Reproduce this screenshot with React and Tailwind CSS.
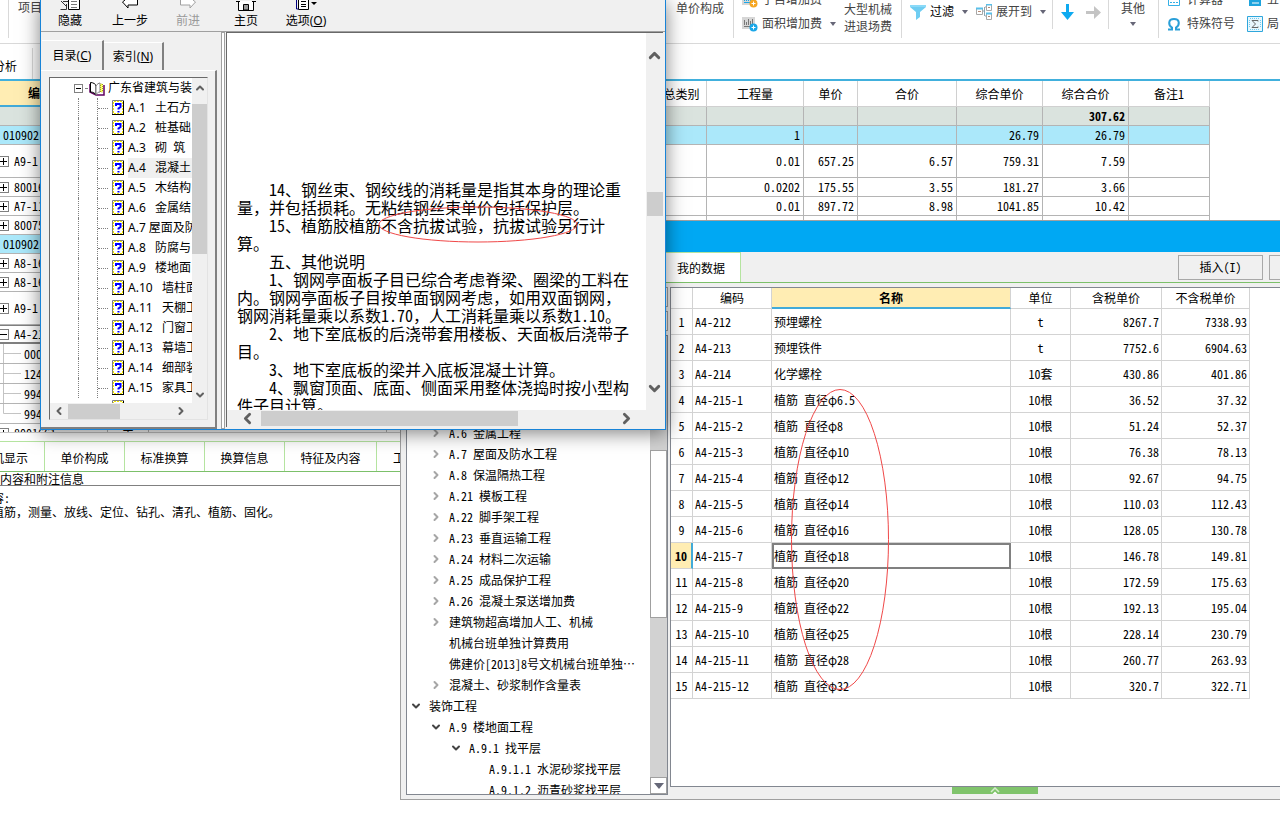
import { ChevronDown, ChevronLeft, ChevronRight, ChevronUp } from "lucide-react";

const SONG = "font-['Noto_Sans_Mono_CJK_SC','Noto_Sans_CJK_SC',monospace]";
const YAHEI = "font-['Noto_Sans','Noto_Sans_CJK_SC',sans-serif]";

const BUDGET_ROWS = [
  { code: "", kind: "total", total: "307.62" },
  { code: "010902", kind: "item", qty: "1", compPrice: "26.79", total: "26.79" },
  { code: "A9-1", mark: "+", tall: true, qty: "0.01", price: "657.25", sum: "6.57", compPrice: "759.31", total: "7.59" },
  { code: "80016", mark: "+", qty: "0.0202", price: "175.55", sum: "3.55", compPrice: "181.27", total: "3.66" },
  { code: "A7-11", mark: "+", qty: "0.01", price: "897.72", sum: "8.98", compPrice: "1041.85", total: "10.42" },
  { code: "80075", mark: "+" },
  { code: "010902", kind: "item" },
  { code: "A8-16", mark: "+" },
  { code: "A8-16", mark: "+" },
  { code: "A9-1", mark: "+", tall: true },
  { code: "A4-21", mark: "-", current: true },
  { code: "0001", child: true },
  { code: "1241", child: true },
  { code: "9946", child: true },
  { code: "9946", child: true, last: true },
  { code: "8001661", mark: "+", type: "主" },
];

const HELP_TOPICS = [
  "A.1   土石方",
  "A.2   桩基础",
  "A.3   砌  筑",
  "A.4   混凝土",
  "A.5   木结构",
  "A.6   金属结",
  "A.7 屋面及防",
  "A.8   防腐与",
  "A.9   楼地面",
  "A.10   墙柱面",
  "A.11   天棚工",
  "A.12   门窗工",
  "A.13   幕墙工",
  "A.14   细部装",
  "A.15   家具工",
];

const HELP_TEXT = [
  ["14、钢丝束、钢绞线的消耗量是指其本身的理论重", "量，并包括损耗。无粘结钢丝束单价包括保护层。"],
  ["15、植筋胶植筋不含抗拔试验，抗拔试验另行计", "算。"],
  ["五、其他说明"],
  [
    "1、钢网亭面板子目已综合考虑脊梁、圈梁的工料在",
    "内。钢网亭面板子目按单面钢网考虑，如用双面钢网，",
    "钢网消耗量乘以系数1.70，人工消耗量乘以系数1.10。",
  ],
  ["2、地下室底板的后浇带套用楼板、天面板后浇带子", "目。"],
  ["3、地下室底板的梁并入底板混凝土计算。"],
  ["4、飘窗顶面、底面、侧面采用整体浇捣时按小型构", "件子目计算。"],
];

const CHAPTERS = [
  { label: "A.6 金属工程", level: 1, state: "closed" },
  { label: "A.7 屋面及防水工程", level: 1, state: "closed" },
  { label: "A.8 保温隔热工程", level: 1, state: "closed" },
  { label: "A.21 模板工程", level: 1, state: "closed" },
  { label: "A.22 脚手架工程", level: 1, state: "closed" },
  { label: "A.23 垂直运输工程", level: 1, state: "closed" },
  { label: "A.24 材料二次运输", level: 1, state: "closed" },
  { label: "A.25 成品保护工程", level: 1, state: "closed" },
  { label: "A.26 混凝土泵送增加费", level: 1, state: "closed" },
  { label: "建筑物超高增加人工、机械", level: 1, state: "closed" },
  { label: "机械台班单独计算费用", level: 1 },
  { label: "佛建价[2013]8号文机械台班单独⋯", level: 1 },
  { label: "混凝土、砂浆制作含量表", level: 1, state: "closed" },
  { label: "装饰工程", level: 0, state: "open" },
  { label: "A.9 楼地面工程", level: 1, state: "open" },
  { label: "A.9.1 找平层", level: 2, state: "open" },
  { label: "A.9.1.1 水泥砂浆找平层", level: 3 },
  { label: "A.9.1.2 沥青砂浆找平层", level: 3 },
];

const LEVEL_PADDING = ["pl-[3px]", "pl-[23px]", "pl-[43px]", "pl-[63px]"];

const QUOTA_ROWS = [
  ["A4-212", "预埋螺栓", "t", "8267.7", "7338.93"],
  ["A4-213", "预埋铁件", "t", "7752.6", "6904.63"],
  ["A4-214", "化学螺栓", "10套", "430.86", "401.86"],
  ["A4-215-1", "植筋 直径φ6.5", "10根", "36.52", "37.32"],
  ["A4-215-2", "植筋 直径φ8", "10根", "51.24", "52.37"],
  ["A4-215-3", "植筋 直径φ10", "10根", "76.38", "78.13"],
  ["A4-215-4", "植筋 直径φ12", "10根", "92.67", "94.75"],
  ["A4-215-5", "植筋 直径φ14", "10根", "110.03", "112.43"],
  ["A4-215-6", "植筋 直径φ16", "10根", "128.05", "130.78"],
  ["A4-215-7", "植筋 直径φ18", "10根", "146.78", "149.81"],
  ["A4-215-8", "植筋 直径φ20", "10根", "172.59", "175.63"],
  ["A4-215-9", "植筋 直径φ22", "10根", "192.13", "195.04"],
  ["A4-215-10", "植筋 直径φ25", "10根", "228.14", "230.79"],
  ["A4-215-11", "植筋 直径φ28", "10根", "260.77", "263.93"],
  ["A4-215-12", "植筋 直径φ32", "10根", "320.7", "322.71"],
];

function Caret() {
  return (
    <svg width="6" height="4" viewBox="0 0 6 4" className="shrink-0">
      <path d="M0 0h6L3 4z" fill="#667" />
    </svg>
  );
}

function GridPlusIcon({ badge, ink }) {
  return (
    <svg width="16" height="16" viewBox="0 0 16 16" className="shrink-0">
      <path d="M0 1h13v12H0z" fill="#d6d6d6" />
      <path d="M2.500 4v5M4.500 6v3M6.500 3v6M8.500 5v4M10.500 3v5M2 10.500h6" stroke={ink} />
      <circle cx="11.500" cy="11.500" r="4" fill={badge} />
      <path d="M11.500 9.500v4M9.500 11.500h4" stroke="#fff" />
    </svg>
  );
}

function FilterIcon() {
  return (
    <svg width="16" height="15" viewBox="0 0 16 15">
      <path d="M0 0h16v2l-6 5v5l-4 3V7L0 2z" fill="#6fcdf2" />
      <path d="M0 0h16v2H0z" fill="#8bdaf8" />
    </svg>
  );
}

function ExpandIcon() {
  return (
    <svg width="16" height="16" viewBox="0 0 16 16" fill="none">
      <path d="M7 7h2M9 3h1M9 12h1M8.500 3v9" stroke="#8fa6b2" />
      <path d="M.5 4.500h6v6h-6zM10.500.5h5v6h-5zM10.500 9.500h5v6h-5z" stroke="#a8a8a8" fill="#fff" />
      <path d="M0 4.500h7M10 .5h6M10 9.500h6" stroke="#59c0ea" strokeWidth="2" />
      <path d="M2 7.500h3M12 3.500h2M12 12.500h2" stroke="#b98a74" />
    </svg>
  );
}

function SigmaIcon() {
  return (
    <svg width="16" height="16" viewBox="0 0 16 16" fill="none">
      <path d="M.5.5h15v15H.5z" stroke="#2fa7dc" fill="#e9f7fd" />
      <path d="M3 2.500h10M3 13.500h10M2.500 4v8M13.500 4v8" stroke="#73c9ec" strokeDasharray="1 1" />
      <path d="M11 5.500V4.500H5l3.500 3.500L5 11.500h6v-1" stroke="#666" />
    </svg>
  );
}

function Divider({ short }) {
  return <div className={`w-px shrink-0 bg-[#d9d9d9] ${short ? "h-[29px]" : "h-[38px]"}`} />;
}

function Ribbon() {
  return (
    <header className={`flex h-11 overflow-hidden border-b border-[#d9d9d9] text-xs whitespace-nowrap text-[#444] ${YAHEI}`}>
      <div className="flex w-[676px] shrink-0 pl-2">
        <Divider />
        <button className="ml-[9px] h-4">项目</button>
      </div>
      <button className="h-[18px]">单价构成</button>
      <div className="ml-[9px] flex">
        <Divider />
        <div className="ml-2 flex h-9 flex-col justify-end">
          <button className="flex h-6 shrink-0 items-center gap-1">
            <GridPlusIcon badge="#f5a623" ink="#1aa7e8" />
            子目增加费
          </button>
          <button className="flex h-6 shrink-0 items-center gap-1">
            <GridPlusIcon badge="#1aa7e8" ink="#777" />
            面积增加费
            <span className="ml-1">
              <Caret />
            </span>
          </button>
        </div>
        <button className="ml-2 h-9 text-left leading-[17px]">
          大型机械
          <br />
          进退场费
        </button>
      </div>
      <div className="ml-[9px] flex">
        <Divider />
        <button className="ml-2 flex h-6 items-center gap-1 text-black">
          <FilterIcon />
          过滤
          <span className="ml-1">
            <Caret />
          </span>
        </button>
        <button className="ml-2 flex h-6 items-center gap-1">
          <ExpandIcon />
          展开到
          <span className="ml-1">
            <Caret />
          </span>
        </button>
      </div>
      <div className="ml-1.5 flex">
        <Divider short />
        <button aria-label="下移" className="ml-2 flex h-6 items-center">
          <svg width="13" height="16" viewBox="0 0 13 16">
            <path d="M5 0h3v8h5l-6.500 8L0 8h5z" fill="#0eaaf0" />
          </svg>
        </button>
        <button aria-label="右移" className="ml-3 flex h-6 items-center">
          <svg width="15" height="13" viewBox="0 0 15 13">
            <path d="M0 5h8V0l7 6.500L8 13V8H0z" fill="#c4c4c4" />
          </svg>
        </button>
      </div>
      <div className="ml-[7px] flex">
        <Divider short />
        <button className="ml-3 flex h-6 flex-col items-center leading-[18px]">
          其他
          <span className="mt-1 block">
            <Caret />
          </span>
        </button>
      </div>
      <div className="ml-[13px] flex">
        <Divider />
        <div className="ml-2 flex h-9 flex-col justify-end">
          <button className="flex h-6 shrink-0 items-center gap-1.5">
            <svg width="14" height="14" viewBox="0 0 14 14" fill="none">
              <path d="M1.500 1.500h11v11h-11z" stroke="#35b0e6" />
              <path d="M3 9.500h2M6 9.500h2M9 9.500h2" stroke="#35b0e6" />
            </svg>
            计算器
          </button>
          <button className="flex h-6 shrink-0 items-center gap-1.5">
            <svg width="14" height="14" viewBox="0 0 14 14" fill="none">
              <path d="M1 12.500h4v-2C1 8 1 2 7 2s6 6 2 8.500v2h4" stroke="#2a9fd8" strokeWidth="2" />
            </svg>
            特殊符号
          </button>
        </div>
        <div className="ml-3 flex h-9 flex-col justify-end">
          <button className="flex h-6 shrink-0 items-center gap-1">
            <svg width="16" height="14" viewBox="0 0 16 14">
              <path d="M2 1h12v12H2z" fill="#1ea4dd" />
              <path d="M5 10h7" stroke="#fff" />
            </svg>
            五
          </button>
          <button className="flex h-6 shrink-0 items-center gap-1">
            <SigmaIcon />
            局
          </button>
        </div>
      </div>
    </header>
  );
}

function CodeCell({ row }) {
  if (row.child) {
    return (
      <div className="flex h-full items-center">
        <svg width="24" height="19" viewBox="0 0 24 19" className="shrink-0" fill="none">
          <path d={row.last ? "M3.500 0v9.500H21" : "M3.500 0v19M3.500 9.500H21"} stroke="#c4c4c4" />
        </svg>
        {row.code}
      </div>
    );
  }
  if (!row.mark) return <div className="pl-[3px]">{row.code}</div>;
  return (
    <div className="flex items-center">
      <button aria-label="展开" className="mr-[5px] flex h-[11px] w-[9px] items-center border border-l-0 border-[#808080] bg-white">
        <svg width="7" height="9" viewBox="0 0 7 9">
          <path d={row.mark === "+" ? "M0 4.500h7M3.500 1v7" : "M0 4.500h7"} stroke="#000" />
        </svg>
      </button>
      {row.code}
    </div>
  );
}

function BudgetTable() {
  const line = "border-r border-b border-[#b4b4b4]";
  const head = "border-r border-b border-[#d0d0d0] p-0 font-normal";
  const num = `${line} p-0 pr-[3px] text-right`;
  return (
    <div className="h-[352px] shrink-0 overflow-hidden border-b border-[#c8c8c8]">
      <table className={`w-[1210px] table-fixed border-separate border-spacing-0 text-xs leading-none whitespace-nowrap ${SONG}`}>
        <colgroup>
          <col className="w-[108px]" />
          <col className="w-[41px]" />
          <col className="w-[238px]" />
          <col className="w-[258px]" />
          <col className="w-[62px]" />
          <col className="w-[97px]" />
          <col className="w-[54px]" />
          <col className="w-[99px]" />
          <col className="w-[86px]" />
          <col className="w-[86px]" />
          <col className="w-[81px]" />
        </colgroup>
        <thead>
          <tr className="h-[26px]">
            <th className="border-r border-b-2 border-r-[#d0d0d0] border-b-[#41aad9] bg-[#ffedb3] p-0 pl-7 text-left font-bold">编码</th>
            <th className={head} />
            <th className={head} />
            <th className={head} />
            <th className={head}>汇总类别</th>
            <th className={head}>工程量</th>
            <th className={head}>单价</th>
            <th className={head}>合价</th>
            <th className={head}>综合单价</th>
            <th className={head}>综合合价</th>
            <th className={head}>备注1</th>
          </tr>
        </thead>
        <tbody>
          {BUDGET_ROWS.map((row, i) => {
            const fill = row.kind === "total" ? "bg-[#dae3de] font-bold" : row.kind === "item" ? "bg-[#abe8fa]" : "";
            const height = row.tall ? "h-[33px]" : "h-[19px]";
            return (
              <tr key={i} className={`${fill} ${height}`}>
                <td className={row.current ? "border-t border-r border-b-2 border-[#808080] p-0" : `${line} h-[19px] p-0`}>
                  <CodeCell row={row} />
                </td>
                <td className={`${line} p-0 text-center`}>{row.type}</td>
                <td className={line} />
                <td className={line} />
                <td className={line} />
                <td className={num}>{row.qty}</td>
                <td className={num}>{row.price}</td>
                <td className={num}>{row.sum}</td>
                <td className={num}>{row.compPrice}</td>
                <td className={num}>{row.total}</td>
                <td className={line} />
              </tr>
            );
          })}
        </tbody>
      </table>
    </div>
  );
}

function DetailPanel() {
  const tab = "h-full shrink-0 border-r border-[#b5e4a0] pt-0.5";
  return (
    <section className={`mt-2 text-xs ${SONG}`}>
      <div className="flex h-[31px] border-t border-b border-t-[#b5e4a0] border-b-[#7cc06a] whitespace-nowrap">
        <button className={`${tab} flex w-[45px] items-center justify-end pr-4`}>工料机显示</button>
        <button className={`${tab} w-20`}>单价构成</button>
        <button className={`${tab} w-20`}>标准换算</button>
        <button className={`${tab} w-20`}>换算信息</button>
        <button className={`${tab} w-[92px]`}>特征及内容</button>
        <button className="h-full pt-0.5 pl-4">工</button>
      </div>
      <h2 className="h-[14px] w-full border-b border-[#808080] leading-[14px]">内容和附注信息</h2>
      <div className="-ml-2 pt-[5px] leading-[14px] whitespace-nowrap">
        <p>容:</p>
        <p>植筋，测量、放线、定位、钻孔、清孔、植筋、固化。</p>
      </div>
    </section>
  );
}

function ChapterTree() {
  return (
    <div className="flex w-[263px] shrink-0 flex-col pl-px">
      <div className="mb-1 h-5 border border-[#a0a0a0] bg-white" />
      <div className="mb-1 h-5 border border-[#a0a0a0] bg-white" />
      <div className="flex min-h-0 flex-1 border border-[#828790] bg-white">
        <ul className="min-w-0 flex-1 overflow-hidden pt-[86px]">
          {CHAPTERS.map((c) => (
            <li key={c.label} className={`flex h-[21px] items-center gap-[7px] whitespace-nowrap ${LEVEL_PADDING[c.level]}`}>
              <span className="w-3 shrink-0">
                {c.state === "closed" && <ChevronRight size={12} strokeWidth={4} color="#a6a6a6" />}
                {c.state === "open" && <ChevronDown size={12} strokeWidth={4} color="#444" />}
              </span>
              {c.label}
            </li>
          ))}
        </ul>
        <div className="flex w-[17px] shrink-0 flex-col bg-[#d2d2d2]">
          <div className="h-[114px]" />
          <div className="h-[168px] border border-[#a0a0a0] bg-white" />
          <div className="flex-1" />
          <button aria-label="向下滚动" className="flex h-[17px] items-center justify-center border border-[#a0a0a0] bg-white">
            <svg width="10" height="6" viewBox="0 0 10 6">
              <path d="M0 0h10L5 6z" fill="#666878" />
            </svg>
          </button>
        </div>
      </div>
    </div>
  );
}

function QuotaTable() {
  const line = "border-r border-b border-[#d3d3d3] p-0";
  return (
    <table className="w-[579px] table-fixed border-separate border-spacing-0 leading-none whitespace-nowrap">
      <colgroup>
        <col className="w-[22px]" />
        <col className="w-[79px]" />
        <col className="w-[239px]" />
        <col className="w-[60px]" />
        <col className="w-[91px]" />
        <col className="w-[88px]" />
      </colgroup>
      <thead>
        <tr className="h-[21px]">
          <th className={line} />
          <th className={`${line} font-normal`}>编码</th>
          <th className="border-r border-b-2 border-r-[#d3d3d3] border-b-[#41aad9] bg-[#ffedb3] p-0 font-bold">名称</th>
          <th className={`${line} font-normal`}>单位</th>
          <th className={`${line} font-normal`}>含税单价</th>
          <th className={`${line} font-normal`}>不含税单价</th>
        </tr>
      </thead>
      <tbody>
        {QUOTA_ROWS.map(([code, name, unit, taxed, untaxed], i) => {
          const active = i === 9;
          return (
            <tr key={code} className="h-[26px]">
              <td className={active ? "border-r-2 border-b border-r-[#41aad9] border-b-[#d3d3d3] bg-[#ffedb3] p-0 text-center font-bold" : `${line} text-center`}>
                {i + 1}
              </td>
              <td className={`${line} pl-0.5`}>{code}</td>
              <td className={active ? "border-2 border-[#808080] p-0" : `${line} pl-0.5`}>{name}</td>
              <td className={`${line} text-center`}>{unit}</td>
              <td className={`${line} pr-0.5 text-right`}>{taxed}</td>
              <td className={`${line} pr-0.5 text-right`}>{untaxed}</td>
            </tr>
          );
        })}
      </tbody>
    </table>
  );
}

function QuotaDialog() {
  return (
    <section className={`absolute top-[220px] right-0 left-[400px] flex h-[580px] flex-col overflow-hidden border border-r-0 border-[#a0a0a0] bg-[#f0f0f0] text-xs ${SONG}`}>
      <div className="h-[31px] shrink-0 bg-[#00a8f3]" />
      <div className="flex h-[31px] shrink-0 border-b border-[#7cc06a]">
        <button className="w-[340px] shrink-0 border-t border-r border-[#b5e4a0] bg-white pr-[15px] text-right">我的数据</button>
        <div className="flex flex-1 items-center justify-end gap-1.5 overflow-hidden">
          <button className="h-[25px] w-[85px] shrink-0 border border-[#a8a8a8]">插入(I)</button>
          <button aria-label="替换" className="h-[25px] w-[11px] shrink-0 border border-r-0 border-[#a8a8a8]" />
        </div>
      </div>
      <div className="flex min-h-0 flex-1 pt-1 pl-1">
        <div className="flex pb-1">
          <ChapterTree />
        </div>
        <div className="ml-0.5 flex min-w-0 flex-1 flex-col">
          <div className="min-h-0 flex-1 overflow-hidden border border-r-0 border-[#828790] bg-white">
            <QuotaTable />
          </div>
          <div className="flex h-3 shrink-0">
            <button aria-label="展开面板" className="ml-[282px] flex h-[7px] w-[86px] items-center justify-center bg-[#80c46c]">
              <svg width="10" height="7" viewBox="0 0 10 7" fill="none">
                <path d="M1 5l4-4 4 4" stroke="#d5edcc" strokeWidth="1.500" />
                <path d="M2.500 7L5 4.500 7.500 7z" fill="#fff" />
              </svg>
            </button>
          </div>
        </div>
      </div>
    </section>
  );
}

function TopicIcon() {
  return (
    <svg width="13" height="16" viewBox="0 0 13 16" className="shrink-0">
      <path d="M1 1h11v14H1z" fill="#fff" />
      <path d="M1.500 2v12M10.500 2v12" stroke="#f5e800" strokeDasharray="2 1" />
      <path d="M2 1.500h9M2 13.500h9" stroke="#f5e800" strokeDasharray="2 1" />
      <path d="M.5 15V.5H12" stroke="#808080" fill="none" />
      <path d="M11.500 1v14M0 14.500h12" stroke="#000" />
      <path d="M4 6V4h4.500v3L6.500 8.500v1M6.500 11v1.500" stroke="#00f" strokeWidth="2" fill="none" />
    </svg>
  );
}

function BookIcon() {
  return (
    <svg width="16" height="15" viewBox="0 0 16 15" className="shrink-0" fill="none">
      <path d="M1 3v8l6 3h8V4" stroke="#600060" strokeWidth="1.500" />
      <path d="M1.500 1.500C4 1.500 7 3 7 5v9c-1-2-3-3-5.500-3z" fill="#fff" stroke="#000" />
      <path d="M7 5c1-2 3-3 4-3v9c-2 0-3 1-4 3z" fill="#fff" stroke="#808080" />
      <path d="M11.500 3h2v8h-2z" fill="#ffff60" stroke="#a8a800" strokeDasharray="1 1" />
    </svg>
  );
}

function HelpTool({ label, disabled, className, children }) {
  return (
    <button disabled={disabled} className={`flex flex-col items-center ${disabled ? "text-[#9a9a9a]" : ""} ${className}`}>
      <span className="block h-[13px]">{children}</span>
      <span className="leading-4">{label}</span>
    </button>
  );
}

function HelpToolbar() {
  return (
    <div className="flex h-8 shrink-0 border-b border-[#a0a0a0] pl-px whitespace-nowrap">
      <HelpTool label="隐藏" className="w-14">
        <svg width="20" height="11" viewBox="0 0 20 11" fill="none">
          <path d="M8.500 0v9.500h11V0" stroke="#000" fill="#fff" />
          <path d="M1 1l5 5M.5 9.500h6V4M3 1.500h5" stroke="#333" />
          <path d="M11 1.500h6M11 4.500h6M11 7.500h6" stroke="#777" />
        </svg>
      </HelpTool>
      <HelpTool label="上一步" className="w-16">
        <svg width="16" height="11" viewBox="0 0 16 11" fill="none">
          <path d="M3 0L.5 2 6 8V5h9.500V0" stroke="#000" fill="#fff" />
        </svg>
      </HelpTool>
      <HelpTool label="前进" disabled className="w-13">
        <svg width="16" height="11" viewBox="0 0 16 11" fill="none">
          <path d="M13 0l2.500 2L10 8V5H.5V0" stroke="#a0a0a0" fill="#fff" />
        </svg>
      </HelpTool>
      <HelpTool label="主页" className="w-16">
        <svg width="20" height="11" viewBox="0 0 20 11" fill="none">
          <path d="M2.500 1v9.500h15V1" stroke="#000" fill="#fff" />
          <path d="M7.500 10V4.500h5V10z" stroke="#000" fill="#999" />
          <path d="M0 1.500h4M16 1.500h4" stroke="#000" />
        </svg>
      </HelpTool>
      <HelpTool label={<>选项(<u>O</u>)</>} className="w-14">
        <svg width="22" height="11" viewBox="0 0 22 11" fill="none">
          <path d="M3.500 0v9.500h10V0" stroke="#000" fill="#fff" />
          <path d="M1.500 0v9h2" stroke="#000080" />
          <path d="M6 1.500h5M6 4.500h5M6 6.500h5" stroke="#000" />
          <path d="M16 2h6l-3 3z" fill="#000" />
        </svg>
      </HelpTool>
    </div>
  );
}

function HelpNav() {
  return (
    <div className="flex w-[176px] shrink-0 flex-col pt-2">
      <div className="flex h-[30px] shrink-0 items-end pl-px">
        <button className="h-[30px] w-[62px] border-t border-r-2 border-t-white border-r-[#808080]">
          目录(<u>C</u>)
        </button>
        <button className="h-7 w-[60px] border-t border-r-2 border-t-white border-r-[#808080]">
          索引(<u>N</u>)
        </button>
      </div>
      <div className="flex min-h-0 flex-1 border-t border-r-2 border-b-2 border-t-white border-r-[#808080] border-b-[#808080] pt-[6px] pr-[7px] pb-[7px] pl-2">
        <div className="flex min-w-0 flex-1 flex-col border border-[#696969] border-r-[#e3e3e3] border-b-[#e3e3e3]">
          <div className="flex min-h-0 flex-1">
            <ul className="relative min-w-0 flex-1 overflow-hidden bg-white whitespace-pre">
              <li className="flex h-5 items-center">
                <span className="ml-6 flex size-[9px] shrink-0 items-center justify-center border border-[#808080]">
                  <span className="h-px w-[5px] bg-black" />
                </span>
                <span className="mx-0.5 w-1 border-t border-dotted border-[#808080]" />
                <BookIcon />
                <span className="ml-[3px]">广东省建筑与装</span>
              </li>
              {HELP_TOPICS.map((topic, i) => (
                <li key={topic} className="ml-7 flex h-5 items-center border-l border-dotted border-[#808080]">
                  <span className="ml-[18px] h-5 w-px border-l border-dotted border-[#808080]" />
                  <span className="mr-1 w-[10px] shrink-0 border-t border-dotted border-[#808080]" />
                  <TopicIcon />
                  <span className={`ml-[3px] h-5 flex-1 leading-5 ${i === 3 ? "bg-[#f0f0f0]" : ""}`}>{topic}</span>
                </li>
              ))}
              <li className="ml-[62px] flex h-5 pt-0.5">
                <TopicIcon />
              </li>
            </ul>
            <div className="flex w-[15px] shrink-0 flex-col items-center bg-[#f0f0f0]">
              <button aria-label="向上滚动" className="mb-1.5 h-5">
                <ChevronUp size={12} strokeWidth={4} color="#606060" />
              </button>
              <div className="h-[150px] w-full bg-[#cdcdcd]" />
              <div className="flex-1" />
              <button aria-label="向下滚动" className="h-4">
                <ChevronDown size={12} strokeWidth={4} color="#606060" />
              </button>
            </div>
          </div>
          <div className="flex h-4 shrink-0 items-center bg-[#f0f0f0]">
            <button aria-label="向左滚动" className="w-[18px] pl-[3px]">
              <ChevronLeft size={12} strokeWidth={4} color="#606060" />
            </button>
            <div className="h-[15px] w-[52px] bg-[#cdcdcd]" />
            <div className="flex-1" />
            <button aria-label="向右滚动" className="mr-5">
              <ChevronRight size={12} strokeWidth={4} color="#606060" />
            </button>
          </div>
        </div>
      </div>
    </div>
  );
}

function HelpDocument() {
  return (
    <div className="mb-0.5 flex min-w-0 flex-1 flex-col border-t border-l border-[#696969]">
      <div className="flex min-h-0 flex-1">
        <article className={`relative min-w-0 flex-1 overflow-hidden bg-white pt-[147px] pl-2.5 text-base leading-[18px] whitespace-nowrap ${SONG}`}>
          {HELP_TEXT.map((lines) => (
            <p key={lines[0]} className="indent-8">
              {lines.map((text, i) => (
                <span key={text}>
                  {i > 0 && <br />}
                  {text}
                </span>
              ))}
            </p>
          ))}
          <svg width="200" height="37" viewBox="0 0 200 37" className="absolute top-[173px] left-[151px]" fill="none">
            <ellipse cx="100" cy="18.500" rx="99" ry="17.500" stroke="#f04848" />
          </svg>
        </article>
        <div className="flex w-[17px] shrink-0 flex-col items-center bg-[#f0f0f0]">
          <button aria-label="向上滚动" className="mt-3 h-5">
            <ChevronUp size={17} strokeWidth={4} color="#606060" />
          </button>
          <div className="mt-[127px] h-6 w-4 bg-[#cdcdcd]" />
          <div className="flex-1" />
          <button aria-label="向下滚动" className="mb-3 h-5">
            <ChevronDown size={17} strokeWidth={4} color="#606060" />
          </button>
        </div>
      </div>
      <div className="flex h-[17px] shrink-0 items-center bg-[#f0f0f0] pl-3">
        <button aria-label="向左滚动" className="w-[22px]">
          <ChevronLeft size={17} strokeWidth={4} color="#606060" />
        </button>
        <div className="h-[15px] w-[257px] bg-[#cdcdcd]" />
        <div className="flex-1" />
        <button aria-label="向右滚动" className="mr-7">
          <ChevronRight size={17} strokeWidth={4} color="#606060" />
        </button>
      </div>
    </div>
  );
}

function HelpWindow() {
  return (
    <section className={`absolute top-0 left-10 flex h-[430px] w-[626px] flex-col border border-t-0 border-[#1883d7] bg-[#f0f0f0] text-xs text-black shadow-[0_3px_18px_rgba(0,0,0,0.5)] ${YAHEI}`}>
      <HelpToolbar />
      <div className="flex min-h-0 flex-1">
        <HelpNav />
        <div className="mr-px ml-1 w-1 shrink-0 border border-[#a0a0a0] bg-white" />
        <HelpDocument />
        <div className="w-0.5 shrink-0" />
      </div>
    </section>
  );
}

export default function App() {
  return (
    <div className="relative h-screen overflow-hidden bg-white text-black">
      <Ribbon />
      <nav className={`flex h-[35px] pt-1 text-xs whitespace-nowrap ${SONG}`}>
        <button className="flex w-8 shrink-0 items-center justify-end pt-1 pr-[15px]">造价分析</button>
        <span className="w-px bg-[#d9d9d9]" />
      </nav>
      <div className="h-0.5 bg-[#41b0dd]" />
      <BudgetTable />
      <DetailPanel />

      <QuotaDialog />
      <svg width="100" height="304" viewBox="0 0 100 304" className="absolute top-[388px] left-[790px]" fill="none">
        <ellipse cx="50" cy="151.500" rx="48.500" ry="150" stroke="#f04848" />
      </svg>
      <HelpWindow />
    </div>
  );
}
